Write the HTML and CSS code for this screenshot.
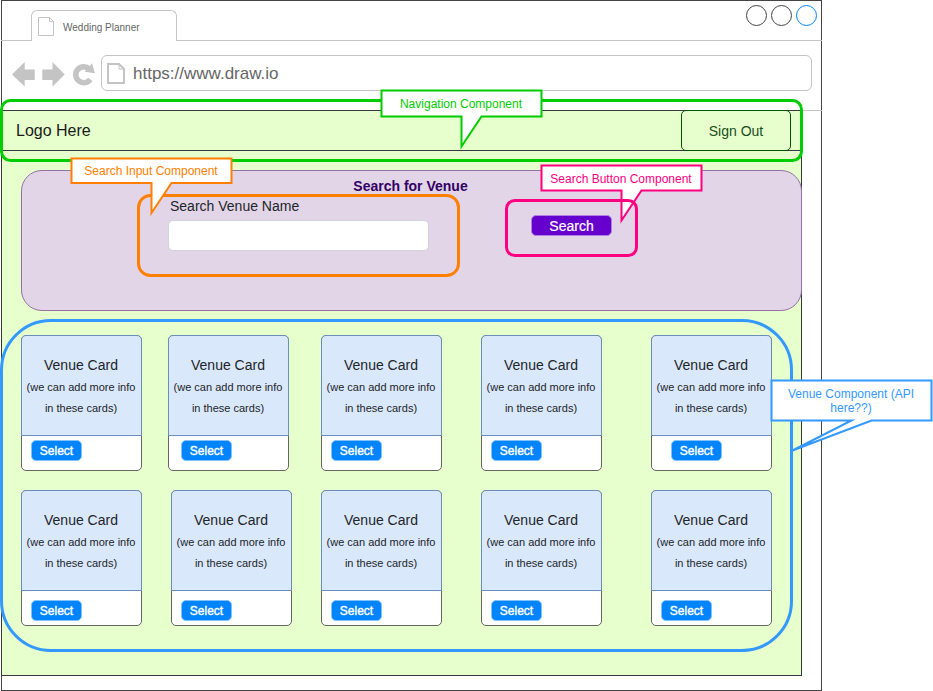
FILE: index.html
```html
<!DOCTYPE html>
<html lang="en">
<head>
<meta charset="utf-8">
<title>Wedding Planner</title>
<link rel="stylesheet" href="styles.css">
</head>
<body>
<div class="canvas">
  <div class="browser">
    <header class="tabs">
      <div class="tab">
        <svg class="tab-icon" width="17" height="20" viewBox="0 0 17 20"><path d="M.5.5h11l4 4v14h-15zM11.500.5v4h4" /></svg>
        <span>Wedding Planner</span>
      </div>
      <div class="controls"><i></i><i></i><i class="active"></i></div>
    </header>
    <div class="toolbar">
      <svg class="nav-icons" width="84" height="26" viewBox="0 0 84 26">
        <path d="M0 12.500 12.700 0v7.500h10v10.500h-10v6.500zM52.700 12.500 40.500 0v7.500H30.300v10.500h10.200v6.500z"/>
        <path class="reload" d="M78.300 17.300A8 8 0 1 1 77.400 7"/>
        <path d="m80 1.300 3 10-10.300-1.600z"/>
      </svg>
      <div class="address">
        <svg class="page-icon" width="18" height="21" viewBox="0 0 18 21"><path d="M1 1h11l5 5v14H1z"/><path class="fold" d="M12 1v5h5"/></svg>
        <span>https://www.draw.io</span>
      </div>
    </div>
    <main class="page">
      <nav class="nav"><span class="logo">Logo Here</span><a class="signout">Sign Out</a></nav>
      <section class="search">
        <h1>Search for Venue</h1>
        <div class="search-row">
          <label class="field">Search Venue Name<span class="input"></span></label>
          <button class="search-button">Search</button>
        </div>
      </section>
      <section class="cards first">
        <article class="card"><div class="info"><h2>Venue Card</h2><p>(we can add more info<br>in these cards)</p></div><button>Select</button></article>
        <article class="card mid"><div class="info"><h2>Venue Card</h2><p>(we can add more info<br>in these cards)</p></div><button>Select</button></article>
        <article class="card"><div class="info"><h2>Venue Card</h2><p>(we can add more info<br>in these cards)</p></div><button>Select</button></article>
        <article class="card"><div class="info"><h2>Venue Card</h2><p>(we can add more info<br>in these cards)</p></div><button>Select</button></article>
        <article class="card far"><div class="info"><h2>Venue Card</h2><p>(we can add more info<br>in these cards)</p></div><button>Select</button></article>
      </section>
      <section class="cards second">
        <article class="card"><div class="info"><h2>Venue Card</h2><p>(we can add more info<br>in these cards)</p></div><button>Select</button></article>
        <article class="card"><div class="info"><h2>Venue Card</h2><p>(we can add more info<br>in these cards)</p></div><button>Select</button></article>
        <article class="card"><div class="info"><h2>Venue Card</h2><p>(we can add more info<br>in these cards)</p></div><button>Select</button></article>
        <article class="card"><div class="info"><h2>Venue Card</h2><p>(we can add more info<br>in these cards)</p></div><button>Select</button></article>
        <article class="card"><div class="info"><h2>Venue Card</h2><p>(we can add more info<br>in these cards)</p></div><button>Select</button></article>
      </section>
    </main>
  </div>
  <svg class="annotations" width="933" height="691" viewBox="0 0 933 691">
    <g class="green">
      <rect class="frame" x="1.500" y="100.500" width="800" height="60" rx="9"/>
      <path class="callout" d="M381.500 90.500h160v26h-60l-20 30v-30h-80z"/>
      <text x="461" y="108">Navigation Component</text>
    </g>
    <g class="orange">
      <rect class="frame" x="138.500" y="195.500" width="320" height="80" rx="12"/>
      <path class="callout" d="M71.500 158.500h160v24.500h-60l-20 30v-30h-80z"/>
      <text x="151" y="175">Search Input Component</text>
    </g>
    <g class="pink">
      <path class="callout" d="M541.500 165.500h160v25h-60l-20 30v-30h-80z"/>
      <rect class="frame" x="506.500" y="200.500" width="130" height="55" rx="8.250"/>
      <text x="621" y="183">Search Button Component</text>
    </g>
    <g class="blue">
      <rect class="frame" x="1.500" y="320.500" width="790" height="330" rx="49.500"/>
      <path class="callout" d="M771.500 380.500h160v40h-60l-79 30 59-30h-80z"/>
      <text x="851" y="398">Venue Component (API</text>
      <text x="851" y="412">here??)</text>
    </g>
  </svg>
</div>
</body>
</html>
```
FILE: styles.css
```css
* { box-sizing: border-box; }
body { margin: 0; background: #fff; font-family: "Liberation Sans", Arial, sans-serif; }
h1, h2, p { margin: 0; }
button { font-family: inherit; padding: 0; }
.canvas { position: relative; width: 933px; height: 691px; overflow: hidden; }
.browser { width: 821px; height: 691px; margin-left: 1px; border: 1px solid #444; }

.tabs { display: flex; justify-content: space-between; height: 40px; margin: 0 -1px; padding: 9px 5px 0 30px; border-bottom: 1px solid #c4c4c4; }
.tab { display: flex; align-items: center; width: 146px; height: 31px; padding: 3px 0 0 6px; gap: 8px; border: 1px solid #c4c4c4; border-bottom: 0; border-radius: 6px 6px 0 0; background: #fff; color: #666; font-size: 10px; }
.tab-icon { margin-top: -1px; }
.tab-icon path { fill: none; stroke: #c4c4c4; }
.controls { display: flex; gap: 4px; margin-top: -5px; }
.controls i { width: 21px; height: 21px; border: 1px solid #444; border-radius: 50%; }
.controls .active { border-color: #0085ff; }

.toolbar { display: flex; height: 70px; margin: 0 -1px; padding: 14px 10px 0 11px; border-bottom: 1px solid #c4c4c4; }
.nav-icons { margin-top: 7px; fill: #c4c4c4; }
.nav-icons .reload { fill: none; stroke: #c4c4c4; stroke-width: 5.5; }
.address { display: flex; align-items: center; gap: 8px; width: 711px; height: 36px; margin-left: 5px; padding-left: 5px; border: 1px solid #c4c4c4; border-radius: 6px; color: #666; font-size: 17px; }
.address span { padding-top: 2px; }
.page-icon { fill: none; stroke: #c4c4c4; stroke-width: 2; }
.page-icon .fold { stroke-width: 1; }

.page { position: relative; width: 801px; height: 566px; margin: -1px 0 0 -1px; border: 1px solid #36393d; background: #e6ffcc; }
.nav { display: flex; justify-content: space-between; height: 41px; margin: -1px; padding: 0 10px 0 15px; border: 1px solid #36393d; }
.logo { font-size: 16px; line-height: 39px; color: #1a1a1a; margin-left: -1px; }
.signout { width: 110px; height: 41px; margin: -1px 0; border: 1px solid #005700; border-radius: 5px; color: #1b4d1b; font-size: 14px; line-height: 41px; text-align: center; }

.search { width: 781px; height: 141px; margin: 20px 0 0 19px; border: 1px solid #9673a6; border-radius: 21px; background: #e1d5e7; }
.search h1 { height: 26px; padding-right: 2px; font-size: 14px; line-height: 30px; text-align: center; color: #306; }
.search-row { display: flex; margin-left: 146px; }
.field { width: 261px; padding-left: 2px; font-size: 14px; line-height: 18px; color: #212529; }
.input { display: block; width: 261px; height: 31px; margin: 5px 0 0 -2px; border: 1px solid #ced4da; border-radius: 5px; background: #fff; }
.search-button { width: 81px; height: 21px; margin: 18px 0 0 102px; padding-top: 1px; border: 1px solid #b27fe5; border-radius: 5px; background: #60c; color: #fff; font-size: 14px; line-height: 18px; -webkit-text-stroke: .2px #fff; }

.cards { display: grid; grid-template-columns: 150px 150px 160px 170px 121px; height: 136px; margin-left: 19px; }
.first { grid-template-columns: 147px 153px 160px 170px 121px; margin-top: 24px; }
.second { margin-top: 19px; }
.card { width: 121px; height: 136px; border: 1px solid #666; border-radius: 5px; background: #fff; }
.info { height: 101px; margin: -1px -1px 0; padding: 19px 1px 0 0; border: 1px solid #6c8ebf; border-radius: 5px 5px 0 0; background: #dae8fc; text-align: center; white-space: nowrap; }
.info h2 { font-size: 14px; font-weight: 400; line-height: 21px; color: #212529; }
.info p { padding-top: 1px; font-size: 11px; line-height: 21px; color: #212529; }
.card button { display: block; width: 51px; height: 21px; margin: 4px 0 0 9px; padding-top: 2px; border: 1px solid #80c2ff; border-radius: 5px; background: #0085ff; color: #fff; font-size: 12px; line-height: 17px; -webkit-text-stroke: .4px #fff; }
.second .card button { margin-top: 9px; }
.first .mid button { margin-left: 12px; }
.first .far button { margin-left: 19px; }

.annotations { position: absolute; inset: 0; pointer-events: none; }
.frame { fill: none; stroke: currentColor; stroke-width: 3; }
.callout { fill: #fff; stroke: currentColor; stroke-width: 2; stroke-miterlimit: 10; }
.annotations text { fill: currentColor; font-size: 12px; text-anchor: middle; }
.green { color: #0c0; }
.orange { color: #ff8000; }
.pink { color: #ff0080; }
.blue { color: #39f; }
```
